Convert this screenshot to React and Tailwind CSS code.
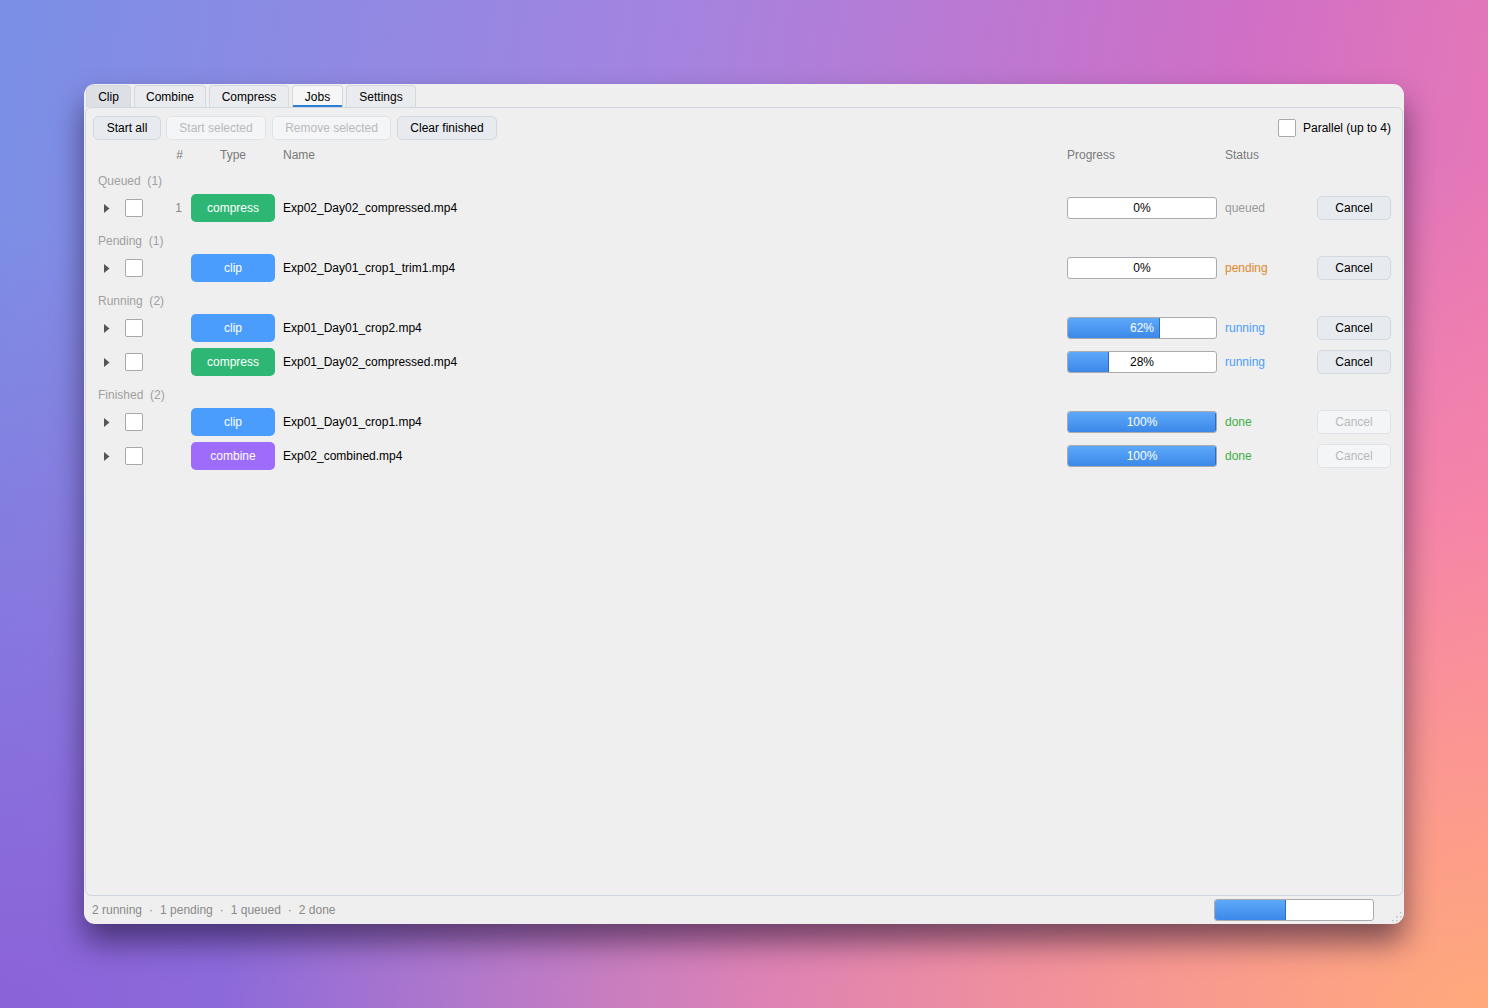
import React from 'react';

const tabs = [
  { t: 'Clip', w: 'w-[45px]' },
  { t: 'Combine', w: 'w-[72px]' },
  { t: 'Compress', w: 'w-[80px]' },
  { t: 'Jobs', w: 'w-[51px]' },
  { t: 'Settings', w: 'w-[70px]' },
];

const badgeColor = {
  compress: 'bg-[#2eb774]',
  clip: 'bg-[#4b9dfd]',
  combine: 'bg-[#9d6cfb]',
};

const statusColor = {
  queued: 'text-[#9a9a9a]',
  pending: 'text-[#e0872a]',
  running: 'text-[#4b9dfd]',
  done: 'text-[#3fae3f]',
};

const groups = [
  { label: 'Queued', jobs: [{ n: '1', type: 'compress', name: 'Exp02_Day02_compressed.mp4', pct: 0, status: 'queued' }] },
  { label: 'Pending', jobs: [{ n: '', type: 'clip', name: 'Exp02_Day01_crop1_trim1.mp4', pct: 0, status: 'pending' }] },
  {
    label: 'Running',
    jobs: [
      { n: '', type: 'clip', name: 'Exp01_Day01_crop2.mp4', pct: 62, status: 'running' },
      { n: '', type: 'compress', name: 'Exp01_Day02_compressed.mp4', pct: 28, status: 'running' },
    ],
  },
  {
    label: 'Finished',
    jobs: [
      { n: '', type: 'clip', name: 'Exp01_Day01_crop1.mp4', pct: 100, status: 'done' },
      { n: '', type: 'combine', name: 'Exp02_combined.mp4', pct: 100, status: 'done' },
    ],
  },
];

// arrow | checkbox | # | type | name | progress | status | cancel
const cols = 'grid grid-cols-[28px_40px_31px_84px_1fr_158px_92px_74px]';

function Checkbox() {
  return <div className="w-[18px] h-[18px] bg-white border border-[#a9a9a9] rounded-[2px]" />;
}

function ProgressBar({ pct, w = 150, label = true }) {
  const light = pct > 50;
  return (
    <div
      className="relative h-[22px] bg-white border border-[#ababab] rounded-[3px] overflow-hidden"
      style={{ width: w }}
    >
      <div
        className="absolute left-0 top-0 bottom-0 bg-gradient-to-b from-[#5ea9fb] to-[#3b88e8] border-r border-[#2f6cc0]"
        style={{ width: `${pct}%`, display: pct ? 'block' : 'none' }}
      />
      {label && (
        <div className={`absolute inset-0 flex items-center justify-center ${light ? 'text-white' : 'text-black'}`}>
          {pct}%
        </div>
      )}
    </div>
  );
}

function Btn({ children, disabled, className = '' }) {
  return (
    <div
      className={`h-[24px] flex items-center justify-center rounded-[5px] border ${
        disabled ? 'bg-[#f4f5f7] border-[#dfe3e8] text-[#b9b9b9]' : 'bg-[#e7eaee] border-[#d2d8df] text-black'
      } ${className}`}
    >
      {children}
    </div>
  );
}

function JobRow({ job }) {
  return (
    <div className={`${cols} h-[34px] items-center`}>
      <div className="pl-[12px]">
        <svg width="6" height="9" viewBox="0 0 6 9"><path d="M0 0 L5.5 4.5 L0 9 Z" fill="#555" /></svg>
      </div>
      <div className="pl-[5px]"><Checkbox /></div>
      <div className="text-right pr-[9px] text-[#8a8a8a]">{job.n}</div>
      <div className={`h-[28px] rounded-[5px] flex items-center justify-center text-white ${badgeColor[job.type]}`}>
        {job.type}
      </div>
      <div className="pl-[8px] text-black">{job.name}</div>
      <ProgressBar pct={job.pct} />
      <div className={statusColor[job.status]}>{job.status}</div>
      <Btn disabled={job.status === 'done'}>Cancel</Btn>
    </div>
  );
}

function ResizeGrip() {
  const dots = [
    [9, 1],
    [9, 5], [5, 5],
    [9, 9], [5, 9], [1, 9],
  ];
  return (
    <svg width="11" height="11" viewBox="0 0 11 11" className="absolute right-[2px] bottom-[2px]">
      {dots.map(([x, y]) => (
        <rect key={`${x}-${y}`} x={x} y={y} width="1.5" height="1.5" fill="#c4c4c4" />
      ))}
    </svg>
  );
}

export default function App() {
  return (
    <div
      className="w-[1488px] h-[1008px] flex items-center justify-center text-[12px]"
      style={{
        fontFamily: '"Liberation Sans", Arial, sans-serif',
        background:
          'radial-gradient(ellipse at 100% 100%, #ffa97b 0%, rgba(255,140,160,0.6) 35%, rgba(255,140,160,0) 60%), radial-gradient(ellipse at 0% 100%, #8b62d8 0%, rgba(139,98,216,0) 55%), linear-gradient(100deg, #7a8fe6 0%, #a384e0 40%, #d06fc6 75%, #f07cb0 100%)',
      }}
    >
      <div className="relative w-[1320px] h-[840px] bg-[#efefef] rounded-[11px] shadow-[0_18px_30px_rgba(20,10,40,0.55)] flex flex-col overflow-hidden px-[1px] pt-[1px]">
        {/* tabs */}
        <div className="flex gap-[3px] pl-[1px] h-[22px] shrink-0">
          {tabs.map(({ t, w }) => {
            const active = t === 'Jobs';
            const hover = t === 'Clip';
            return (
              <div
                key={t}
                className={`relative ${w} flex items-center justify-center border border-b-0 border-[#d4d9df] rounded-t-[4px] text-black ${
                  active ? 'bg-[#f6f6f6]' : hover ? 'bg-[#dcdfe3]' : 'bg-[#e9ebee]'
                }`}
              >
                {t}
                {active && <div className="absolute left-0 right-0 bottom-0 h-[2px] bg-[#2d7fd6]" />}
              </div>
            );
          })}
        </div>

        {/* pane */}
        <div className="flex-1 border border-[#cfd6de] rounded-[6px] pl-[6px] pr-[11px] pt-[8px] flex flex-col">
          <div className="flex items-center h-[24px]">
            <div className="flex ml-[1px]">
              <Btn className="w-[68px]">Start all</Btn>
              <Btn disabled className="w-[100px] ml-[5px]">Start selected</Btn>
              <Btn disabled className="w-[119px] ml-[6px]">Remove selected</Btn>
              <Btn className="w-[100px] ml-[6px]">Clear finished</Btn>
            </div>
            <div className="ml-auto flex items-center gap-[7px]">
              <Checkbox />
              <span className="text-black">Parallel (up to 4)</span>
            </div>
          </div>

          <div className={`${cols} h-[20px] mt-[5px] items-center text-[#7a7a7a]`}>
            <div />
            <div />
            <div className="text-right pr-[8px]">#</div>
            <div className="text-center">Type</div>
            <div className="pl-[8px]">Name</div>
            <div>Progress</div>
            <div>Status</div>
            <div />
          </div>

          {groups.map((g) => (
            <div key={g.label}>
              <div className="h-[26px] pt-[6px] flex items-center pl-[6px] text-[#a0a0a0]">
                {g.label}&nbsp;&nbsp;({g.jobs.length})
              </div>
              {g.jobs.map((j) => (
                <JobRow key={j.name} job={j} />
              ))}
            </div>
          ))}
        </div>

        {/* status bar */}
        <div className="h-[28px] shrink-0 flex items-center pl-[7px] pr-[29px] text-[#8a8a8a]">
          <span>2 running</span>
          <span className="mx-[7px]">·</span>
          <span>1 pending</span>
          <span className="mx-[7px]">·</span>
          <span>1 queued</span>
          <span className="mx-[7px]">·</span>
          <span>2 done</span>
          <div className="ml-auto">
            <ProgressBar pct={45} w={160} label={false} />
          </div>
        </div>
        <ResizeGrip />
      </div>
    </div>
  );
}
